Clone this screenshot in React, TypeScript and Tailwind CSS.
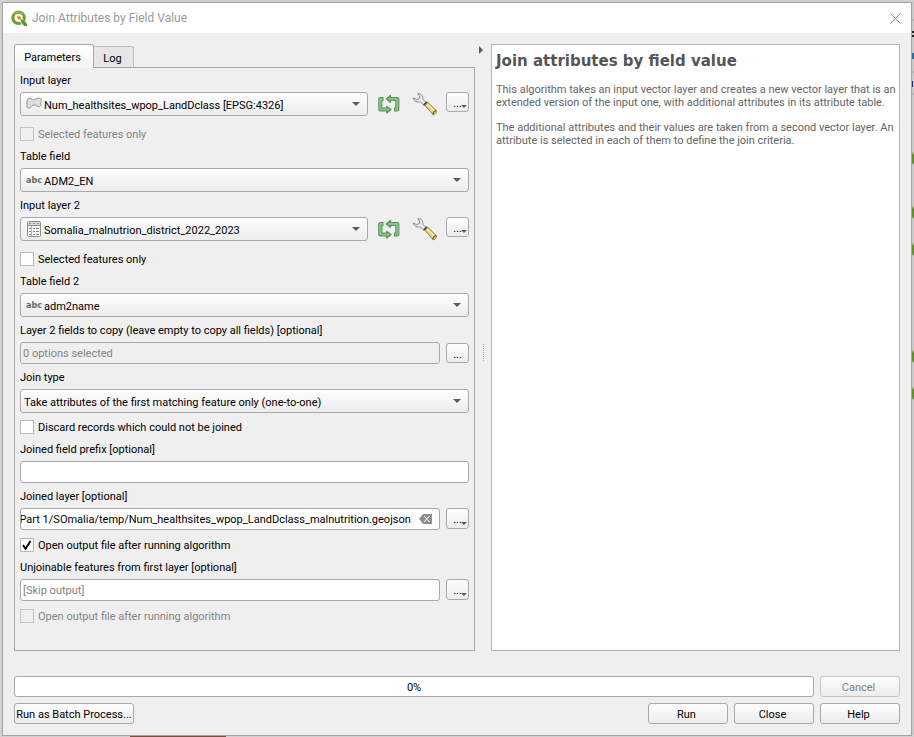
import { useEffect, useRef, useState, type ReactNode } from "react";

const UI = "font-['Roboto',sans-serif]";
const FACE = "border border-[#a9a9a9] rounded-[3px] bg-linear-to-b from-[#fefefe] to-[#ececec]";

function QgisLogo() {
  return (
    <svg viewBox="0 0 16 16" className="h-4 w-4 shrink-0" aria-hidden="true">
      <circle cx="7.6" cy="7.8" r="5.7" fill="none" stroke="#6f9f2b" strokeWidth="3.2" />
      <path d="M3 4.5a5.7 5.7 0 0 1 9-.3" fill="none" stroke="#93b63b" strokeWidth="2" />
      <path d="M9 8.6l2.400 0 4.400 5v2.300h-3.600L9 12z" fill="#fff" />
      <path d="M9.800 9.400h2.200l4 4.400v2.100h-2.800L9.800 12z" fill="#589632" />
      <path d="M6.200 6.200h2.400l1.700 1.800-.8 1.700-1.600-.2L6.200 8z" fill="#ee7913" />
    </svg>
  );
}

function PolygonIcon() {
  return (
    <svg viewBox="0 0 16 14" className="h-[14px] w-4 shrink-0" aria-hidden="true">
      <path
        d="M1.200 3C2 1 3.600 1 5 1.700c2 1.200 3.300 1.200 5 .2C11.600.9 15 .8 15.300 2.600c.3 1.500-.7 2.400-.5 4.400.2 1.800-.8 3.300-2.600 2.700-1.600-.8-3.200-1.900-5-1.700-1.700.2-2 3-4 3.100C1.400 11.200.5 9.500.8 7.500 1 5.700.6 4.500 1.200 3z"
        fill="#dedede"
        stroke="#959595"
      />
    </svg>
  );
}

function TableIcon() {
  return (
    <svg viewBox="0 0 16 16" className="h-4 w-4 shrink-0" aria-hidden="true">
      <rect x="1.500" y=".5" width="13" height="15" rx="1" fill="#f4f4f4" stroke="#8d8d8d" />
      <path d="M2 1h12v3H2z" fill="#d9d9d9" />
      <path d="M3 2.500h2M7 2.500h2M11 2.500h2M2 4.500h12" stroke="#8d8d8d" />
      <path d="M5.500 5v10" stroke="#b5b5b5" />
      <path d="M3 7.500h2M7 7.500h2M10 7.500h3M3 10.500h2M7 10.500h2M10 10.500h3M3 13.500h2M7 13.500h2M10 13.500h3" stroke="#858585" />
    </svg>
  );
}

function AbcIcon() {
  return (
    <span className="flex h-4 w-4 shrink-0 items-center font-['DejaVu_Sans_Condensed','DejaVu_Sans',sans-serif] text-[9px] leading-none font-bold text-[#6a6a6a]">
      abc
    </span>
  );
}

function IterateIcon() {
  return (
    <svg viewBox="0 0 24 22" className="h-[22px] w-6" aria-hidden="true">
      <g fill="none" stroke="#57935a" strokeWidth="4.200" strokeLinejoin="round">
        <path d="M6.500 6H3.300v10.500H10M17 16.500h3.300V6H13" />
      </g>
      <path d="M9.800 13.500l4.200 3-4.200 3.600zM13.400 2.500 9.400 6l4 3.200z" fill="#8cc08b" stroke="#57935a" strokeWidth="1.300" strokeLinejoin="round" />
      <g fill="none" stroke="#8cc08b" strokeWidth="2.200" strokeLinejoin="round">
        <path d="M5.600 6H3.300v10.500H11.500M17.900 16.500h2.400V6H12" />
      </g>
    </svg>
  );
}

function WrenchIcon() {
  return (
    <svg viewBox="0 0 26 24" className="h-6 w-[26px]" aria-hidden="true">
      <path d="M12.800 13l2.800-2.700 8.600 8.200c1 1-.6 4-3 4.300z" fill="#f0d376" stroke="#8a7d50" strokeLinejoin="round" />
      <path d="M15.500 12.200l7 7" stroke="#fbeeb4" strokeWidth="1.200" />
      <path d="M20.800 22.500c.2-2 1.600-3.500 3.400-3.800" fill="none" stroke="#6f6337" strokeWidth="1.300" />
      <path
        d="M5.800 1.600C8 1.200 10.600 2.900 10.800 5.400c0 .7 0 1.200-.2 1.800l4 3.600-2.600 2.600-3.600-3.500C5.500 10.700 2 9.400 1.200 5.900L4.700 7.700 7.600 6.400 7.500 4z"
        fill="#ececec"
        stroke="#8a8a8a"
        strokeLinejoin="round"
      />
      <path d="M11.700 13.200l3.200-3.200" stroke="#4b4b4b" strokeWidth="1.800" />
    </svg>
  );
}

function DownArrow() {
  return (
    <svg viewBox="0 0 8 4" className="h-1 w-2 shrink-0" aria-hidden="true">
      <path d="M0 0h8L4 4z" fill="#5a5a5a" />
    </svg>
  );
}

function Label({ htmlFor, children }: { htmlFor: string; children: ReactNode }) {
  return (
    <label htmlFor={htmlFor} className="mb-[3px] block h-4 leading-4">
      {children}
    </label>
  );
}

function Combo({ id, icon, value }: { id: string; icon?: ReactNode; value: string }) {
  return (
    <div className={`flex h-6 min-w-0 flex-1 items-center pr-[7px] ${FACE} ${icon ? "pl-[5px]" : "pl-[3px]"}`}>
      {icon}
      <select id={id} className={`h-full min-w-0 flex-1 appearance-none bg-transparent pt-[2px] outline-none ${icon ? "pl-[2px]" : ""}`}>
        <option>{value}</option>
      </select>
      <DownArrow />
    </div>
  );
}

function MoreButton({ label, menu = true, className }: { label: string; menu?: boolean; className: string }) {
  return (
    <button type="button" aria-label={label} className={`relative w-[23px] shrink-0 pt-[2px] leading-[18px] ${FACE} ${className}`}>
      ...
      {menu && (
        <svg viewBox="0 0 6 3" className="absolute right-px bottom-[3px] h-[3px] w-[6px]" aria-hidden="true">
          <path d="M0 0h6L3 3z" fill="#5a5a5a" />
        </svg>
      )}
    </button>
  );
}

function Check({ id, children, disabled, initial = false, className }: { id: string; children: ReactNode; disabled?: boolean; initial?: boolean; className: string }) {
  const [on, setOn] = useState(initial);
  return (
    <div className={`mb-[7px] flex h-4 items-center gap-[4px] ${className}`}>
      <span className="grid h-[14px] w-[14px]">
        <input
          id={id}
          type="checkbox"
          checked={on}
          disabled={disabled}
          onChange={(e) => setOn(e.target.checked)}
          className="col-start-1 row-start-1 h-[14px] w-[14px] appearance-none border border-[#b9b9b9] bg-white disabled:border-[#c4c4c4] disabled:bg-[#efefef]"
        />
        {on && (
          <svg viewBox="0 0 14 14" className="pointer-events-none col-start-1 row-start-1 h-[14px] w-[14px]" aria-hidden="true">
            <path d="M3 7.200l2.600 3.600L10.500 3" fill="none" stroke="#000" strokeWidth="2" />
          </svg>
        )}
      </span>
      <label htmlFor={id} className={disabled ? "text-[#838383]" : ""}>
        {children}
      </label>
    </div>
  );
}

function LayerRow({ id, icon, value }: { id: string; icon: ReactNode; value: string }) {
  return (
    <div className="flex items-start">
      <Combo id={id} icon={icon} value={value} />
      <button type="button" aria-label="Iterate over this layer" className="ml-[9px] pt-px">
        <IterateIcon />
      </button>
      <button type="button" aria-label="Advanced options" className="ml-[11px]">
        <WrenchIcon />
      </button>
      <MoreButton label="Browse for layer" className="ml-2 h-5" />
    </div>
  );
}

const BOX = "border border-[#a9a9a9] rounded-[3px] bg-white";

function OutputPath() {
  const ref = useRef<HTMLInputElement>(null);
  useEffect(() => {
    if (ref.current) ref.current.scrollLeft = ref.current.scrollWidth;
  }, []);
  return (
    <div className={`flex h-[22px] min-w-0 flex-1 items-center pr-[7px] ${BOX}`}>
      <input
        ref={ref}
        id="joined"
        defaultValue="Ex Part 1/SOmalia/temp/Num_healthsites_wpop_LandDclass_malnutrition.geojson"
        className="h-full min-w-0 flex-1 text-right outline-none"
      />
      <button type="button" aria-label="Clear" className="ml-2 shrink-0">
        <svg viewBox="0 0 13 10" className="h-[10px] w-[13px]" aria-hidden="true">
          <path d="M4 0h9v10H4L0 5z" fill="#8e8e8e" />
          <path d="M5 2l5.500 6M10.500 2L5 8" stroke="#fff" />
        </svg>
      </button>
    </div>
  );
}

function PushButton({ children, className = "w-20 pr-[3px]", disabled }: { children: ReactNode; className?: string; disabled?: boolean }) {
  return (
    <button type="button" disabled={disabled} className={`h-[21px] shrink-0 whitespace-nowrap pt-px disabled:border-[#c6c6c6] disabled:text-[#838383] ${FACE} ${className}`}>
      {children}
    </button>
  );
}

function Backdrop() {
  return (
    <svg viewBox="0 0 2 733" className="w-[2px] shrink-0 self-start" aria-hidden="true">
      <path d="M0 0h2v733H0z" fill="#c9c9c9" />
      <path d="M0 18h2M0 70h2M0 92h2" stroke="#a0a0a0" />
      <path d="M0 29h2v2H0zM0 33h2v2H0z" fill="#222" />
      <path d="M0 51h2v6H0z" fill="#2b6da8" />
      <path d="M0 79h1v6H0z" fill="#1d2f80" />
      <path d="M0 150l2 3v10l-2-2zM0 204l2 3v10l-2-2zM0 241l2 3v10l-2-2zM0 348l2 3v10l-2-2zM0 385l2 3v10l-2-2z" fill="#5f8f25" />
    </svg>
  );
}

export default function App() {
  return (
    <div className={`flex min-h-screen flex-col bg-[#d0d0d0] pt-[2px] text-[11px] leading-[13px] text-black ${UI}`}>
      <div className="flex flex-1 pl-[2px]">
        <main className="flex min-w-0 flex-1 flex-col border border-[#a3a3a3] bg-[#efefef]">
          <header className="flex h-[30px] items-center bg-white pr-[10px] pl-2">
            <QgisLogo />
            <h1 className="ml-[5px] flex-1 text-xs text-[#999]">Join Attributes by Field Value</h1>
            <button type="button" aria-label="Close window">
              <svg viewBox="0 0 11 11" className="h-[11px] w-[11px]" aria-hidden="true">
                <path d="M.5.5l10 10M10.500.5l-10 10" stroke="#8a8a8a" />
              </svg>
            </button>
          </header>

          <div className="flex flex-1 flex-col px-[11px] pt-[11px] pb-[11px]">
            <div className="grid flex-1 grid-cols-[minmax(0,461fr)_16px_minmax(0,409fr)]">
              <section className="flex min-w-0 flex-col">
                <div role="tablist" className="flex items-end">
                  <button type="button" role="tab" aria-selected="true" className="z-10 -mb-px h-6 w-20 rounded-t-[3px] border border-b-0 border-[#a9a9a9] bg-linear-to-b from-white to-[#f4f4f4] pt-[2px] pr-[3px]">
                    Parameters
                  </button>
                  <button type="button" role="tab" aria-selected="false" className="h-[21px] w-10 rounded-tr-[3px] border-t border-r border-[#bcbcbc] bg-[#e6e6e6] pt-[2px] pr-[2px]">
                    Log
                  </button>
                </div>
                <div role="tabpanel" className="flex-1 border border-[#a9a9a9] px-[5px] pt-[5px]">
                  <Label htmlFor="layer1">Input layer</Label>
                  <LayerRow id="layer1" icon={<PolygonIcon />} value="Num_healthsites_wpop_LandDclass [EPSG:4326]" />
                  <Check id="sel1" disabled className="mt-[10px]">Selected features only</Check>

                  <Label htmlFor="field1">Table field</Label>
                  <div className="mb-[6px] flex">
                    <Combo id="field1" icon={<AbcIcon />} value="ADM2_EN" />
                  </div>

                  <Label htmlFor="layer2">Input layer 2</Label>
                  <LayerRow id="layer2" icon={<TableIcon />} value="Somalia_malnutrion_district_2022_2023" />
                  <Check id="sel2" className="mt-[10px]">Selected features only</Check>

                  <Label htmlFor="field2">Table field 2</Label>
                  <div className="mb-[6px] flex">
                    <Combo id="field2" icon={<AbcIcon />} value="adm2name" />
                  </div>

                  <Label htmlFor="copy">Layer 2 fields to copy (leave empty to copy all fields) [optional]</Label>
                  <div className="mb-[6px] flex items-center gap-[6px]">
                    <input id="copy" readOnly defaultValue="0 options selected" className="h-[22px] min-w-0 flex-1 rounded-[3px] border border-[#a9a9a9] bg-[#efefef] px-[2px] pt-px text-[#838383]" />
                    <MoreButton label="Choose fields" menu={false} className="h-5" />
                  </div>

                  <Label htmlFor="type">Join type</Label>
                  <div className="flex">
                    <Combo id="type" value="Take attributes of the first matching feature only (one-to-one)" />
                  </div>
                  <Check id="discard" className="mt-[6px]">Discard records which could not be joined</Check>

                  <Label htmlFor="prefix">Joined field prefix [optional]</Label>
                  <div className="mb-[6px] flex">
                    <input id="prefix" className={`h-[22px] min-w-0 flex-1 px-[2px] ${BOX}`} />
                  </div>

                  <Label htmlFor="joined">Joined layer [optional]</Label>
                  <div className="flex gap-[6px]">
                    <OutputPath />
                    <MoreButton label="Output options" className="h-[21px]" />
                  </div>
                  <Check id="open1" initial className="mt-[7px]">Open output file after running algorithm</Check>

                  <Label htmlFor="unjoined">Unjoinable features from first layer [optional]</Label>
                  <div className="flex gap-[6px]">
                    <input id="unjoined" placeholder="[Skip output]" className={`h-[22px] min-w-0 flex-1 px-[2px] placeholder:text-[#838383] ${BOX}`} />
                    <MoreButton label="Unjoinable output options" className="h-[21px]" />
                  </div>
                  <Check id="open2" disabled className="mt-[7px]">Open output file after running algorithm</Check>
                </div>
              </section>

              <div className="flex flex-col items-center">
                <button type="button" aria-label="Collapse help" className="mt-[2px] mr-[5px]">
                  <svg viewBox="0 0 4 8" className="h-2 w-1" aria-hidden="true">
                    <path d="M0 0v8l4-4z" fill="#5a5a5a" />
                  </svg>
                </button>
                <div className="my-auto h-[17px] w-px border-l border-dotted border-[#a9a9a9]" />
              </div>

              <article className="min-w-0 border border-[#b4b4b4] bg-white pt-[6px] pr-px pl-1 text-[#646464]">
                <h2 className="font-['DejaVu_Sans',sans-serif] text-[15px] leading-5 font-bold text-[#555]">Join attributes by field value</h2>
                <p className="mt-3">
                  This algorithm takes an input vector layer and creates a new vector layer that is an extended version of the input one, with additional attributes in its attribute table.
                </p>
                <p className="mt-3">
                  The additional attributes and their values are taken from a second vector layer. An attribute is selected in each of them to define the join criteria.
                </p>
              </article>
            </div>

            <div className="mt-[25px] flex gap-[6px]">
              <div role="progressbar" aria-valuenow={0} className={`flex h-[21px] flex-1 items-center justify-center pt-px ${BOX}`}>0%</div>
              <PushButton disabled>Cancel</PushButton>
            </div>
            <div className="mt-[6px] flex gap-[6px]">
              <PushButton className="mr-auto w-[120px]">Run as Batch Process...</PushButton>
              <PushButton>Run</PushButton>
              <PushButton>Close</PushButton>
              <PushButton>Help</PushButton>
            </div>
          </div>
        </main>
        <Backdrop />
      </div>
      <div className="h-px pl-[130px]">
        <div className="h-px w-24 bg-[#7d4f38]" />
      </div>
    </div>
  );
}
